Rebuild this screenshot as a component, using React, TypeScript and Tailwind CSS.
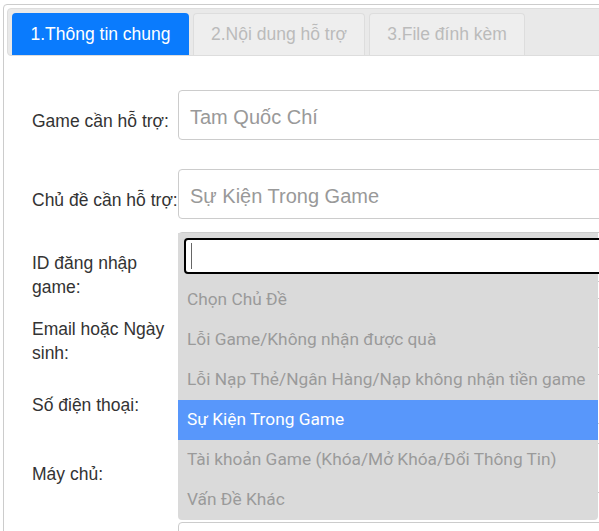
import React from "react";

const labelCls =
  "w-[146px] shrink-0 text-[17.5px] leading-[24px] text-[#333] pt-[19px]";

function Row({
  label,
  mt,
  value,
}: {
  label: string;
  mt: string;
  value?: string;
}) {
  return (
    <div className={`flex items-start ${mt}`}>
      <div className={labelCls}>{label}</div>
      <div className="h-[50px] w-[500px] shrink-0 rounded-[4px] border border-[#ccc] bg-white pl-[11px] pt-[3px] flex items-center text-[20px] text-[#999]">
        {value}
      </div>
    </div>
  );
}

export default function App() {
  const options = [
    "Chọn Chủ Đề",
    "Lỗi Game/Không nhận được quà",
    "Lỗi Nạp Thẻ/Ngân Hàng/Nạp không nhận tiền game",
    "Sự Kiện Trong Game",
    "Tài khoản Game (Khóa/Mở Khóa/Đổi Thông Tin)",
    "Vấn Đề Khác",
  ];
  return (
    <div
      className="relative h-[531px] w-[599px] overflow-hidden bg-white pl-[3px] pt-[4px]"
      style={{ fontFamily: '"Liberation Sans", Arial, sans-serif' }}
    >
      <div className="w-[700px] h-[600px] rounded-tl-[4px] border border-[#ccc] p-[3px]">
        {/* Tab bar */}
        <div className="flex h-[48px] items-end gap-[4px] rounded-[4px] border border-[#ddd] bg-[#e9e9e9] pl-[4px]">
          <div className="flex h-[42px] w-[177px] items-center justify-center rounded-t-[4px] bg-[#0a7bfd] text-[17.5px] text-white">
            1.Thông tin chung
          </div>
          <div className="flex h-[42px] w-[172px] items-center justify-center rounded-t-[4px] border border-b-0 border-[#ddd] bg-[#eeeeee] text-[17.5px] text-[#bbb]">
            2.Nội dung hỗ trợ
          </div>
          <div className="flex h-[42px] w-[156px] items-center justify-center rounded-t-[4px] border border-b-0 border-[#ddd] bg-[#eeeeee] text-[17.5px] text-[#bbb]">
            3.File đính kèm
          </div>
        </div>

        {/* Form */}
        <div className="relative pl-[25px] pt-[34px]">
          <Row label="Game cần hỗ trợ:" mt="mt-0" value="Tam Quốc Chí" />
          <Row
            label="Chủ đề cần hỗ trợ:"
            mt="mt-[29px]"
            value="Sự Kiện Trong Game"
          />
          <Row label="ID đăng nhập game:" mt="mt-[13px]" />
          <Row label="Email hoặc Ngày sinh:" mt="-mt-[1px]" />
          <Row label="Số điện thoại:" mt="mt-[9px]" />
          <Row label="Máy chủ:" mt="mt-[19px]" />
          <div className="mt-[29px] flex">
            <div className="w-[146px] shrink-0" />
            <div className="h-[50px] w-[500px] rounded-[4px] border border-[#ccc]" />
          </div>

          {/* Dropdown overlay */}
          <div
            className="absolute left-[171px] top-[177px] w-[420px] rounded-b-[4px] bg-[#dadada] pt-[5px] pl-[6px]"
            style={{ fontFamily: 'Roboto, "Liberation Sans", sans-serif' }}
          >
            <div className="flex h-[36px] w-[500px] items-center rounded-[4px] border-2 border-black bg-white pl-[5px]">
              <span className="block h-[26px] w-[1px] bg-[#666]" />
            </div>
            <div className="mt-[6px] -ml-[6px]">
              {options.map((o) => (
                <div
                  key={o}
                  className={`flex h-[40px] items-center pl-[9px] text-[17.3px] whitespace-nowrap ${
                    o === "Sự Kiện Trong Game"
                      ? "bg-[#5897fb] text-white"
                      : "text-[#9a9a9a]"
                  }`}
                >
                  {o}
                </div>
              ))}
            </div>
          </div>
        </div>
      </div>
    </div>
  );
}
